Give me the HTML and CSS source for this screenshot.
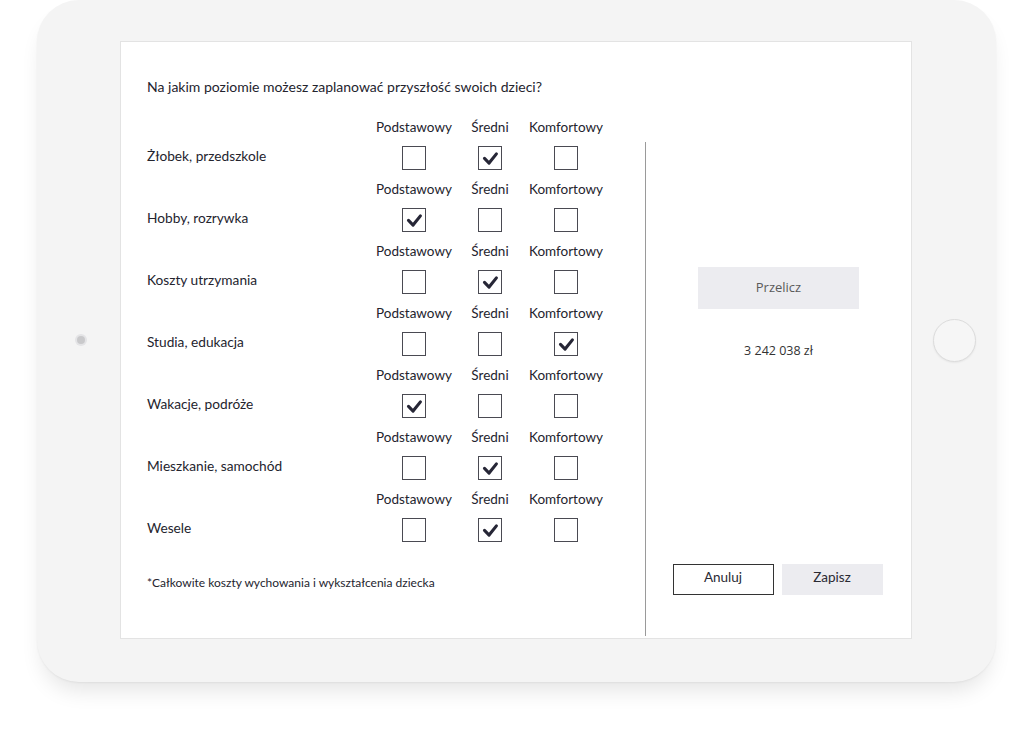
FILE: index.html
```html
<!DOCTYPE html>
<html lang="pl">
<head>
<meta charset="utf-8">
<title>Planowanie przyszłości dzieci</title>
<link rel="stylesheet" href="styles.css">
</head>
<body>
<div class="stage">
  <div class="tablet">
    <div class="bezel-side">
      <span class="camera"></span>
    </div>
    <div class="screen">
      <p class="question">Na jakim poziomie możesz zaplanować przyszłość swoich dzieci?</p>
      <div class="main">
        <div class="left">
          <div class="row">
            <span></span><span class="opt">Podstawowy</span><span class="opt">Średni</span><span class="opt">Komfortowy</span>
            <span class="label">Żłobek, przedszkole</span>
            <span class="box"></span>
            <span class="box checked"><svg viewBox="0 0 24 24"><path d="M6 12.5 L11 17.5 L19 7.5"/></svg></span>
            <span class="box"></span>
          </div>
          <div class="row">
            <span></span><span class="opt">Podstawowy</span><span class="opt">Średni</span><span class="opt">Komfortowy</span>
            <span class="label">Hobby, rozrywka</span>
            <span class="box checked"><svg viewBox="0 0 24 24"><path d="M6 12.5 L11 17.5 L19 7.5"/></svg></span>
            <span class="box"></span>
            <span class="box"></span>
          </div>
          <div class="row">
            <span></span><span class="opt">Podstawowy</span><span class="opt">Średni</span><span class="opt">Komfortowy</span>
            <span class="label">Koszty utrzymania</span>
            <span class="box"></span>
            <span class="box checked"><svg viewBox="0 0 24 24"><path d="M6 12.5 L11 17.5 L19 7.5"/></svg></span>
            <span class="box"></span>
          </div>
          <div class="row">
            <span></span><span class="opt">Podstawowy</span><span class="opt">Średni</span><span class="opt">Komfortowy</span>
            <span class="label">Studia, edukacja</span>
            <span class="box"></span>
            <span class="box"></span>
            <span class="box checked"><svg viewBox="0 0 24 24"><path d="M6 12.5 L11 17.5 L19 7.5"/></svg></span>
          </div>
          <div class="row">
            <span></span><span class="opt">Podstawowy</span><span class="opt">Średni</span><span class="opt">Komfortowy</span>
            <span class="label">Wakacje, podróże</span>
            <span class="box checked"><svg viewBox="0 0 24 24"><path d="M6 12.5 L11 17.5 L19 7.5"/></svg></span>
            <span class="box"></span>
            <span class="box"></span>
          </div>
          <div class="row">
            <span></span><span class="opt">Podstawowy</span><span class="opt">Średni</span><span class="opt">Komfortowy</span>
            <span class="label">Mieszkanie, samochód</span>
            <span class="box"></span>
            <span class="box checked"><svg viewBox="0 0 24 24"><path d="M6 12.5 L11 17.5 L19 7.5"/></svg></span>
            <span class="box"></span>
          </div>
          <div class="row">
            <span></span><span class="opt">Podstawowy</span><span class="opt">Średni</span><span class="opt">Komfortowy</span>
            <span class="label">Wesele</span>
            <span class="box"></span>
            <span class="box checked"><svg viewBox="0 0 24 24"><path d="M6 12.5 L11 17.5 L19 7.5"/></svg></span>
            <span class="box"></span>
          </div>
          <p class="note">*Całkowite koszty wychowania i wykształcenia dziecka</p>
        </div>
        <div class="right">
          <button class="btn-calc" type="button">Przelicz</button>
          <p class="result">3 242 038 zł</p>
          <div class="actions">
            <button class="btn btn-outline" type="button">Anuluj</button>
            <button class="btn btn-fill" type="button">Zapisz</button>
          </div>
        </div>
      </div>
    </div>
    <div class="bezel-side">
      <span class="home"></span>
    </div>
  </div>
</div>
</body>
</html>
```

FILE: styles.css
```css
* { box-sizing: border-box; }

html, body {
  margin: 0;
  padding: 0;
  background: #ffffff;
}

body {
  width: 1024px;
  height: 736px;
  overflow: hidden;
  font-family: "Lato", "Open Sans", sans-serif;
  color: #24242e;
}

.stage {
  padding-left: 37px;
  padding-top: 0;
}

.tablet {
  width: 959px;
  height: 682px;
  background: #f4f4f4;
  border-radius: 42px;
  display: flex;
  align-items: stretch;
  padding: 41px 0 43px 0;
  box-shadow: 0 14px 22px -6px rgba(0, 0, 0, 0.11), 0 1px 2px rgba(0, 0, 0, 0.05);
}

.bezel-side {
  width: 83px;
  display: flex;
  align-items: center;
  justify-content: center;
  flex: none;
}

.bezel-side:last-child {
  width: 84px;
}

.camera {
  width: 8px;
  height: 8px;
  border-radius: 50%;
  background: #c9c9cb;
  box-shadow: 0 0 0 2px #e4e4e6;
  margin-left: 4px;
}

.home {
  width: 43px;
  height: 43px;
  border-radius: 50%;
  border: 1.5px solid #dcdcdc;
  background: #f6f6f6;
  box-shadow: 0 1px 2px rgba(0,0,0,0.06);
}

.screen {
  width: 792px;
  flex: none;
  background: #ffffff;
  border: 1px solid #e3e3e3;
  display: flex;
  flex-direction: column;
  padding: 0 0 2px 0;
}

.question {
  margin: 36px 0 0 26px;
  font-size: 14px;
  line-height: 18px;
}

.main {
  flex: 1;
  display: flex;
  margin-top: 22px;
}

.left {
  width: 524px;
  flex: none;
  padding-left: 26px;
}

.row {
  display: grid;
  grid-template-columns: 229px 76px 76px 76px;
  grid-template-rows: 18px 24px;
  row-gap: 10px;
  margin-bottom: 10px;
  align-items: center;
  justify-items: center;
}

.opt {
  font-size: 13.5px;
  line-height: 18px;
  white-space: nowrap;
}

.label {
  justify-self: start;
  font-size: 13.7px;
  line-height: 18px;
  margin-top: -4px;
}

.box {
  width: 24px;
  height: 24px;
  border: 1.3px solid #4a4a52;
  background: #fff;
  display: block;
}

.box svg {
  display: block;
  width: 100%;
  height: 100%;
}

.box path {
  fill: none;
  stroke: #262636;
  stroke-width: 3.4;
  stroke-linecap: round;
  stroke-linejoin: round;
}

.note {
  margin: 33px 0 0 0;
  font-size: 12px;
  line-height: 16px;
}

.right {
  flex: 1;
  margin-top: 24px;
  border-left: 1px solid #9a9a9a;
  display: flex;
  flex-direction: column;
  align-items: center;
  padding: 125px 0 41px 0;
}

.btn-calc {
  width: 161px;
  height: 42px;
  border: none;
  background: #ececf0;
  font-family: "Open Sans", sans-serif;
  font-size: 13px;
  color: #5a5a5a;
  margin: 0;
  padding: 0 0 2px 0;
}

.result {
  margin: 33px 0 0 0;
  font-family: "Open Sans", sans-serif;
  font-size: 12.5px;
  line-height: 18px;
  color: #333;
}

.actions {
  margin-top: auto;
  display: flex;
  gap: 8px;
  margin-left: -2px;
}

.btn {
  width: 101px;
  height: 31px;
  font-family: "Lato", sans-serif;
  font-size: 13.5px;
  color: #2a2a33;
  margin: 0;
  padding: 0 0 5px 0;
}

.btn-outline {
  background: #fff;
  border: 1.3px solid #333;
}

.btn-fill {
  background: #ececf0;
  border: none;
}
```
